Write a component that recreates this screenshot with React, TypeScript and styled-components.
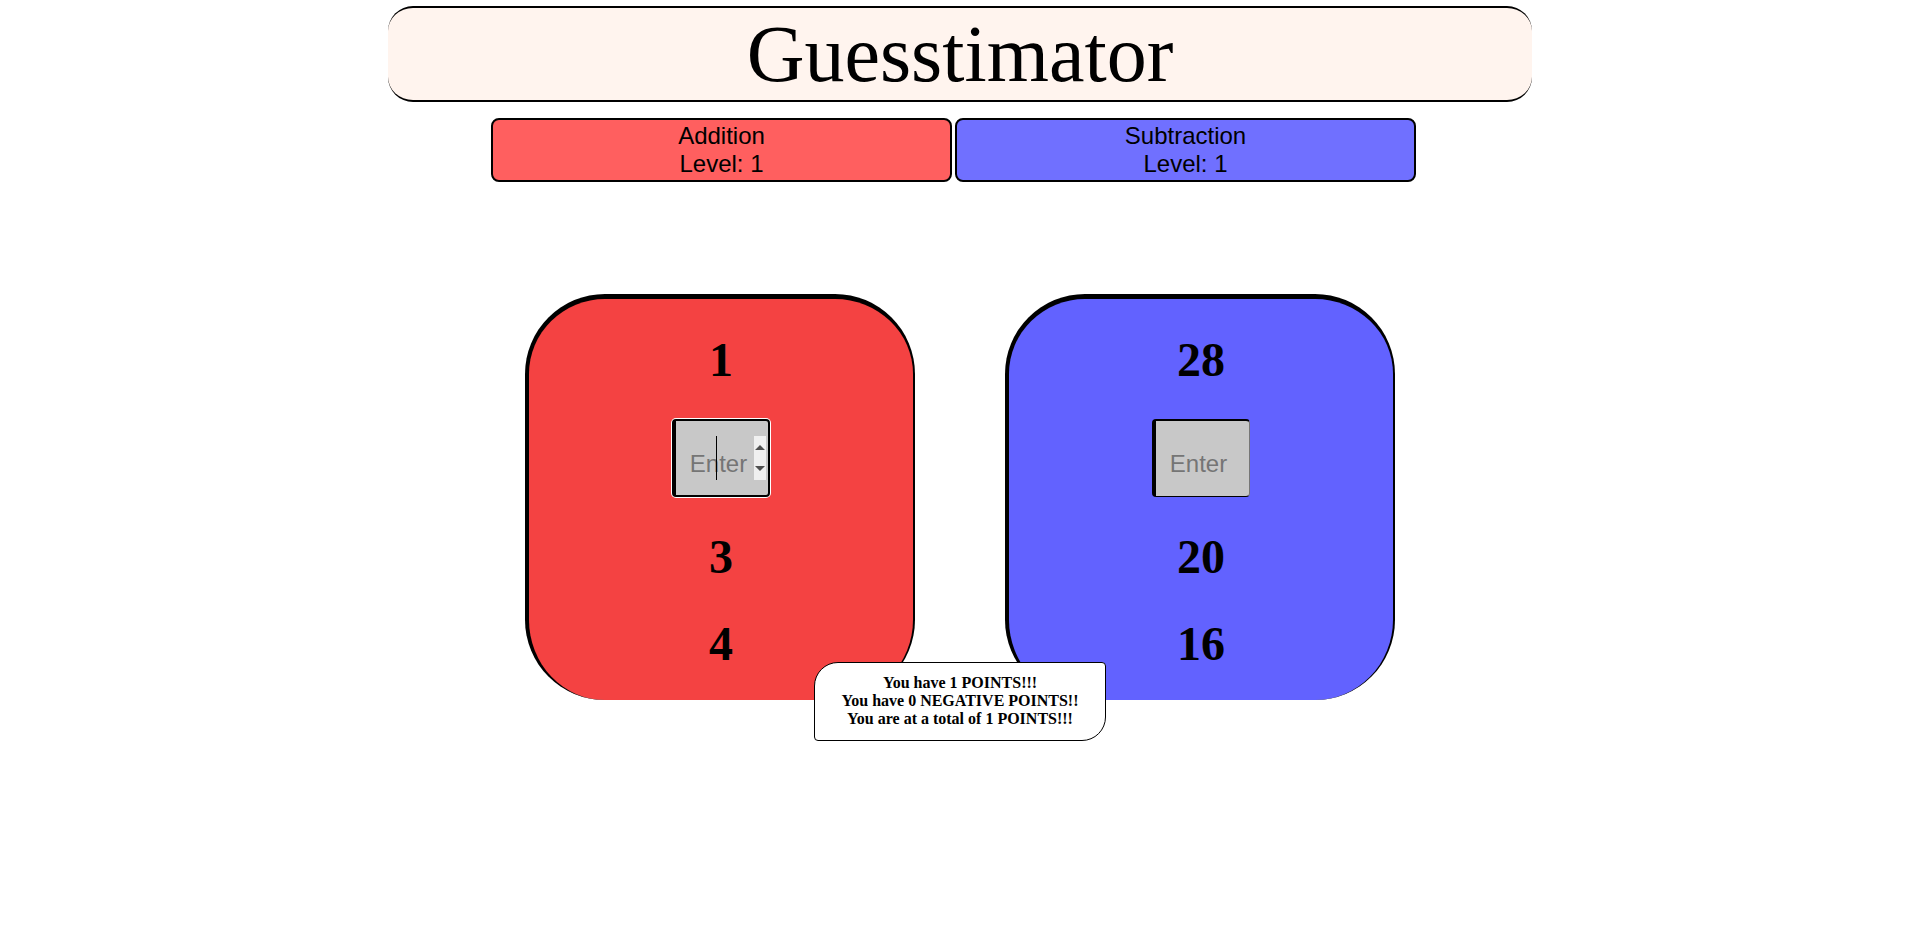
import React from 'react';
import styled, { createGlobalStyle } from 'styled-components';

const GlobalStyle = createGlobalStyle`
  *, *::before, *::after { box-sizing: border-box; }
  body {
    margin: 0;
    background: #fff;
    color: #000;
    font-family: 'Liberation Serif', 'Times New Roman', serif;
  }
`;

const Page = styled.main`
  display: flex;
  flex-direction: column;
  align-items: center;
  padding: 6px 8px 16px 10px;
`;

const Title = styled.h1`
  width: 100%;
  max-width: 1144px;
  margin: 0 0 16px;
  border: solid #000;
  border-width: 2px 0;
  border-radius: 25px;
  background: #fff4ee;
  font-size: 80px;
  font-weight: 400;
  line-height: 92px;
  text-align: center;
`;

const ModeBar = styled.nav`
  display: flex;
  gap: 3px;
  width: 100%;
  max-width: 938px;
  margin-bottom: 112px;
  padding-right: 13px;
`;

const ModeButton = styled.button<{ $color: string }>`
  flex: 1;
  padding: 2px 6px;
  border: 2px solid #000;
  border-radius: 8px;
  background: ${(p) => p.$color};
  color: #000;
  font-family: 'Liberation Sans', Arial, sans-serif;
  font-size: 24px;
  line-height: 28px;
  cursor: pointer;
`;

const ModeLine = styled.span`
  display: block;
`;

const Boards = styled.div`
  display: flex;
  justify-content: center;
  gap: 90px;
  width: 100%;
`;

const Board = styled.section<{ $color: string }>`
  display: flex;
  flex: 0 1 390px;
  flex-direction: column;
  align-items: center;
  gap: 32px;
  padding: 33px 0 29px;
  border: solid #000;
  border-width: 5px 2px 0 4px;
  border-radius: 80px;
  background: ${(p) => p.$color};
`;

const Term = styled.strong`
  font-size: 48px;
  line-height: 55px;
`;

const GuessField = styled.label<{ $active: boolean }>`
  position: relative;
  display: block;

  &::after {
    content: '';
    display: ${(p) => (p.$active ? 'block' : 'none')};
    position: absolute;
    top: 17px;
    left: 44px;
    width: 1px;
    height: 44px;
    background: #000;
  }
`;

const GuessInput = styled.input<{ $active: boolean }>`
  display: block;
  width: 98px;
  height: 78px;
  margin: 0;
  padding: ${(p) => (p.$active ? '16px 2px 14px 10px' : '16px 3px 15px 10px')};
  border: solid #000;
  border-width: ${(p) => (p.$active ? '2px 2px 2px 4px' : '2px 1px 1px 4px')};
  border-right-color: ${(p) => (p.$active ? '#000' : '#767676')};
  border-radius: 4px;
  outline: none;
  box-shadow: ${(p) => (p.$active ? '0 0 0 1px #fff' : 'none')};
  background: #c8c8c8;
  caret-color: transparent;
  font-family: 'Liberation Sans', Arial, sans-serif;
  font-size: 38px;
  text-align: center;

  &::placeholder {
    color: #757575;
    font-size: 24px;
  }

  &::-webkit-inner-spin-button {
    width: 12px;
    height: 44px;
    opacity: 0;
  }
`;

const Stepper = styled.svg`
  position: absolute;
  top: 17px;
  right: 4px;
  width: 12px;
  height: 44px;
  background: #f0f0f0;
  fill: #505050;
  pointer-events: none;
`;

const Score = styled.output`
  position: relative;
  margin-top: -38px;
  padding: 11px 26px 12px;
  border: 1px solid #000;
  border-radius: 24px 4px;
  background: #fff;
  font-size: 16px;
  font-weight: 700;
  line-height: 18px;
  text-align: center;
`;

const ScoreLine = styled.span`
  display: block;
`;

type BoardData = {
  name: string;
  level: number;
  buttonColor: string;
  boardColor: string;
  terms: (number | null)[];
  active: boolean;
};

const boards: BoardData[] = [
  { name: 'Addition', level: 1, buttonColor: '#ff5f5f', boardColor: '#f44242', terms: [1, null, 3, 4], active: true },
  { name: 'Subtraction', level: 1, buttonColor: '#7070ff', boardColor: '#6262ff', terms: [28, null, 20, 16], active: false },
];

export default function App() {
  return (
    <>
      <GlobalStyle />
      <Page>
        <Title>Guesstimator</Title>
        <ModeBar>
          {boards.map((b) => (
            <ModeButton key={b.name} type="button" $color={b.buttonColor}>
              <ModeLine>{b.name}</ModeLine>
              <ModeLine>Level: {b.level}</ModeLine>
            </ModeButton>
          ))}
        </ModeBar>
        <Boards>
          {boards.map((b) => (
            <Board key={b.name} $color={b.boardColor} aria-label={b.name}>
              {b.terms.map((term, i) =>
                term === null ? (
                  <GuessField key={i} $active={b.active}>
                    <GuessInput
                      type="number"
                      placeholder="Enter"
                      aria-label={`${b.name} guess`}
                      autoFocus={b.active}
                      $active={b.active}
                    />
                    {b.active && (
                      <Stepper viewBox="0 0 12 44" aria-hidden="true">
                        <path d="M1 14 L6 9 L11 14 Z M1 30 L11 30 L6 35 Z" />
                      </Stepper>
                    )}
                  </GuessField>
                ) : (
                  <Term key={i}>{term}</Term>
                )
              )}
            </Board>
          ))}
        </Boards>
        <Score>
          <ScoreLine>You have 1 POINTS!!!</ScoreLine>
          <ScoreLine>You have 0 NEGATIVE POINTS!!</ScoreLine>
          <ScoreLine>You are at a total of 1 POINTS!!!</ScoreLine>
        </Score>
      </Page>
    </>
  );
}
